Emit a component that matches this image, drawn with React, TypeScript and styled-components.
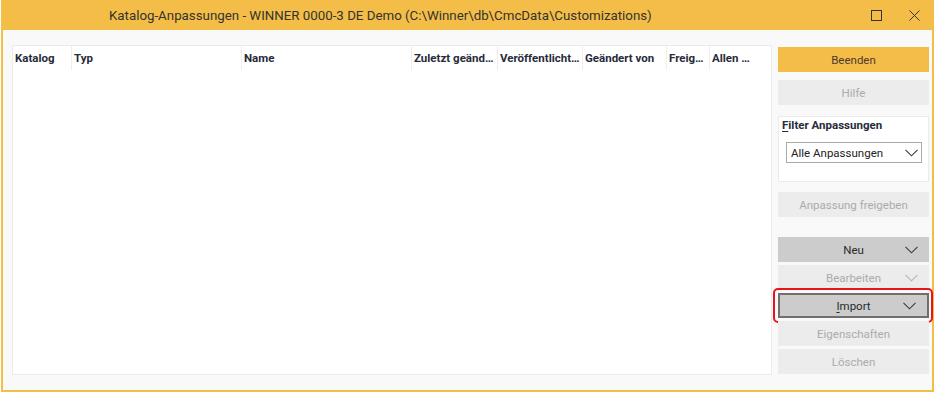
import React from 'react';
import styled, { createGlobalStyle, css } from 'styled-components';

const GlobalStyle = createGlobalStyle`
	html, body {
		margin: 0;
		padding: 0;
		background: #ffffff;
	}
	body {
		font-family: Roboto, 'Noto Sans', sans-serif;
	}
`;

const yellow = '#f4bd48';

const Window = styled.div`
	box-sizing: border-box;
	margin-left: 1px;
	width: 933px;
	height: 392px;
	display: flex;
	flex-direction: column;
	border: 2px solid ${yellow};
	border-top: 0;
	background: #f9f9f9;
`;

const TitleBar = styled.header`
	height: 30px;
	flex: none;
	display: flex;
	align-items: center;
	background: ${yellow};
	margin: 0 -2px;
	padding-left: 108px;
	padding-right: 14px;
`;

const Title = styled.h1`
	flex: 1;
	margin: 0;
	font-size: 13.3px;
	font-weight: 400;
	color: #33332f;
`;

const WindowControls = styled.div`
	display: flex;
	align-items: center;
	gap: 27px;
`;

const Body = styled.main`
	flex: 1;
	display: flex;
	gap: 6px;
	padding: 15px 3px 15px 9px;
	min-height: 0;
`;

const Table = styled.section`
	flex: 1;
	background: #ffffff;
	border: 1px solid #ebebeb;
`;

const HeaderRow = styled.div`
	display: flex;
	height: 24px;
`;

const HeaderCell = styled.div<{ $w: number }>`
	box-sizing: border-box;
	width: ${(p) => p.$w}px;
	flex: none;
	padding: 5px 2px 0 2px;
	font-size: 11.5px;
	font-weight: 700;
	color: #272b3a;
	white-space: nowrap;
	overflow: hidden;
	text-overflow: ellipsis;
	border-right: 1px solid #eeeeee;

	&:last-child {
		border-right: 0;
	}
`;

const Sidebar = styled.aside`
	width: 151px;
	flex: none;
	display: flex;
	flex-direction: column;
	padding-top: 2px;
`;

const Button = styled.div<{ $variant?: 'primary' | 'active' | 'disabled'; $mt?: number; $focus?: boolean }>`
	position: relative;
	box-sizing: border-box;
	height: 25px;
	flex: none;
	margin-top: ${(p) => p.$mt ?? 3}px;
	display: flex;
	align-items: center;
	justify-content: center;
	font-size: 11.5px;
	background: #ececec;
	color: #ababab;

	${(p) =>
		p.$variant === 'primary' &&
		css`
			background: ${yellow};
			color: #4e3a30;
		`}
	${(p) =>
		p.$variant === 'active' &&
		css`
			background: #cccccc;
			color: #2a2a2a;
		`}
	${(p) =>
		p.$focus &&
		css`
			border: 2px solid #6f6f6f;
			&::after {
				content: '';
				position: absolute;
				inset: -7px -6px -7px -7px;
				border: 2px solid #e8141b;
				border-radius: 5px;
			}
		`}

	u {
		text-decoration-thickness: 1px;
		text-underline-offset: 2px;
	}
`;

const Chevron = styled.svg<{ $dim?: boolean }>`
	position: absolute;
	right: 11px;
	top: 50%;
	transform: translateY(-50%);
	width: 13px;
	height: 8px;
	stroke: ${(p) => (p.$dim ? '#b4b4b4' : '#3a3a3a')};
	fill: none;
`;

const FilterBox = styled.div`
	box-sizing: border-box;
	flex: none;
	margin-top: 11px;
	padding: 1px 6px 0 3px;
	height: 66px;
	border: 1px solid #ebebeb;
	background: #ffffff;
`;

const FilterLabel = styled.div`
	font-size: 11.5px;
	font-weight: 700;
	color: #272b3a;
	line-height: 14px;

	u {
		text-underline-offset: 2px;
	}
`;

const Select = styled.div`
	position: relative;
	box-sizing: border-box;
	margin: 10px 0 0 4px;
	height: 21px;
	border: 1px solid #a9a9a9;
	display: flex;
	align-items: center;
	padding-left: 4px;
	font-size: 11.5px;
	color: #222222;

	svg {
		right: 3px;
	}
`;

function ChevronIcon({ dim }: { dim?: boolean }) {
	return (
		<Chevron $dim={dim} viewBox="0 0 13 8">
			<polyline points="0.5,0.8 6.5,6.8 12.5,0.8" strokeWidth="1.1" />
		</Chevron>
	);
}

const columns: [string, number][] = [
	['Katalog', 59],
	['Typ', 170],
	['Name', 170],
	['Zuletzt geändert', 86],
	['Veröffentlicht am', 85],
	['Geändert von', 84],
	['Freigegeben', 43],
	['Allen Kunden', 48],
];

export default function App() {
	return (
		<>
			<GlobalStyle />
			<Window>
				<TitleBar>
					<Title>Katalog-Anpassungen - WINNER 0000-3 DE Demo (C:\Winner\db\CmcData\Customizations)</Title>
					<WindowControls>
						<svg width="11" height="11" viewBox="0 0 11 11">
							<rect x="0.5" y="0.5" width="10" height="10" fill="none" stroke="#333" strokeWidth="1" />
						</svg>
						<svg width="11" height="11" viewBox="0 0 11 11">
							<path d="M0.5 0.5 L10.5 10.5 M10.5 0.5 L0.5 10.5" stroke="#333" strokeWidth="1" />
						</svg>
					</WindowControls>
				</TitleBar>
				<Body>
					<Table>
						<HeaderRow>
							{columns.map(([label, w]) => (
								<HeaderCell key={label} $w={w} title={label}>
									{label}
								</HeaderCell>
							))}
						</HeaderRow>
					</Table>
					<Sidebar>
						<Button $variant="primary" $mt={0}>Beenden</Button>
						<Button $mt={8}>Hilfe</Button>
						<FilterBox>
							<FilterLabel>
								<u>F</u>ilter Anpassungen
							</FilterLabel>
							<Select>
								Alle Anpassungen
								<ChevronIcon />
							</Select>
						</FilterBox>
						<Button $mt={10}>Anpassung freigeben</Button>
						<Button $variant="active" $mt={20}>
							Neu
							<ChevronIcon />
						</Button>
						<Button>
							Bearbeiten
							<ChevronIcon dim />
						</Button>
						<Button $variant="active" $focus>
							<span>
								<u>I</u>mport
							</span>
							<ChevronIcon />
						</Button>
						<Button>Eigenschaften</Button>
						<Button>Löschen</Button>
					</Sidebar>
				</Body>
			</Window>
		</>
	);
}
